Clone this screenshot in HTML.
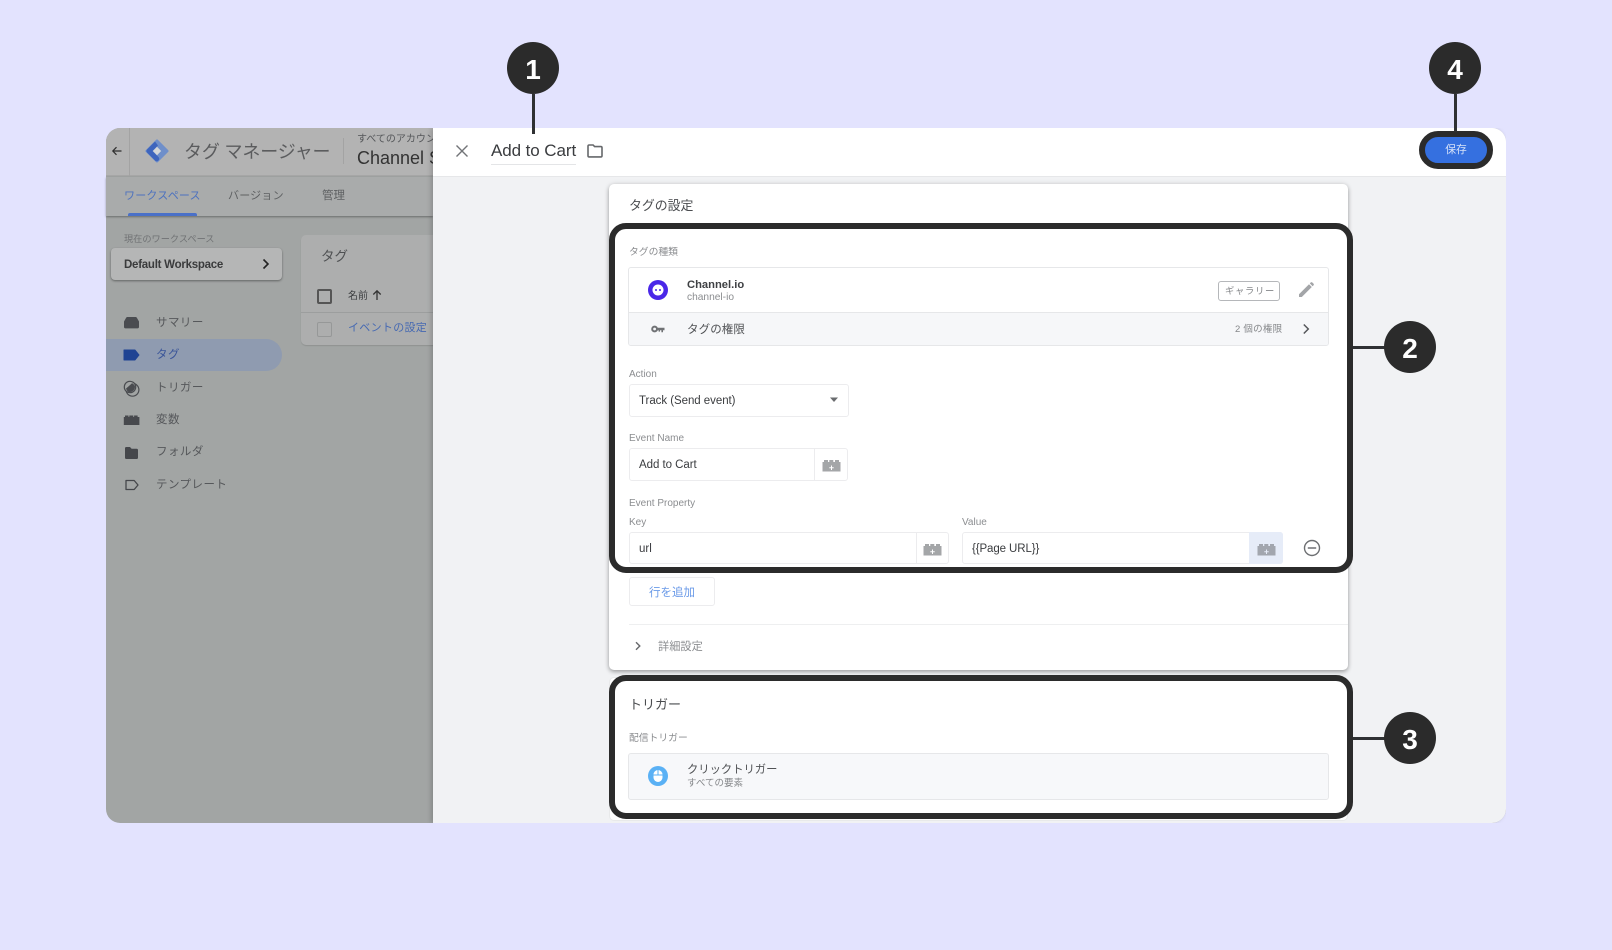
<!DOCTYPE html>
<html lang="ja"><head><meta charset="utf-8"><title>Add to Cart</title>
<style>
html,body{margin:0;padding:0}
body{width:1612px;height:950px;overflow:hidden;background:#e3e3fe;position:relative;font-family:"Liberation Sans","Noto Sans CJK JP",sans-serif;color:#3c4043}
div,span,svg{position:absolute;box-sizing:border-box}
.t{white-space:nowrap;line-height:20px;height:20px;filter:blur(.3px)}
.lbl{font-size:10px;color:#8b8d90}
.val{font-size:11.5px;color:#3a3c3f}
.nav{font-size:11.5px;color:#56585b;letter-spacing:.45px}
.box{background:#fff;border:1px solid #ececee;border-radius:3px}
.hl{border:6px solid #2b2b2b;border-radius:17px}
.dot{width:52px;height:52px;border-radius:50%;background:#2b2b2b;color:#fff;font-weight:bold;font-size:28px;line-height:55px;text-align:center}
.ln{background:#2f3133}
</style></head>
<body>

<div id="app" style="left:106px;top:128px;width:1400px;height:695px;border-radius:14px;overflow:hidden;background:#a2a5a4">
  <div style="left:0;top:0;width:327px;height:48px;background:#b3b3b3;border-bottom:1px solid #a6a6a6"></div>
  <div style="left:23px;top:0;width:1px;height:48px;background:#a3a3a3"></div>
  <div style="left:237px;top:10px;width:1px;height:26px;background:#a3a3a3"></div>
</div>

<svg style="left:111px;top:145px" width="12" height="12" viewBox="0 0 12 12"><path d="M10.5 6H2M5.5 2.2L1.800 6l3.700 3.800" fill="none" stroke="#2e2e2e" stroke-width="1.200"/></svg>
<svg style="left:144px;top:138px" width="26" height="26" viewBox="0 0 26 26">
  <path d="M13 3L23 13 13 23 3 13z" fill="#6f8fca" stroke="#6f8fca" stroke-width="3" stroke-linejoin="round"/>
  <path d="M11 3.500L3 11.500c-.8.800-.8 2.200 0 3l8 8c1 1 2.500 1 3.500 0s1-2.500 0-3.500L8.500 13 14 7.500" fill="#3e65bd"/>
  <path d="M13 8.800l4.200 4.200-4.200 4.200L8.800 13z" fill="#d4d6d8"/>
</svg>
<div class="t" style="left:184px;top:142px;font-size:18px;color:#5b5c5e;letter-spacing:-.15px">タグ マネージャー</div>
<div style="left:357px;top:128px;width:76px;height:48px;overflow:hidden">
  <div class="t" style="left:0;top:2px;font-size:10px;color:#55575a">すべてのアカウント</div>
  <div class="t" style="left:0;top:20px;font-size:18px;color:#333">Channel Site</div>
</div>

<div style="left:106px;top:177px;width:327px;height:39px;background:#a9abab;box-shadow:0 1px 2px rgba(0,0,0,.35)"></div>
<div class="t" style="left:124px;top:186px;font-size:11px;color:#4d72bf;letter-spacing:.2px">ワークスペース</div>
<div class="t" style="left:228px;top:186px;font-size:11px;color:#5e6062;letter-spacing:.2px">バージョン</div>
<div class="t" style="left:322px;top:186px;font-size:11.5px;color:#5e6062">管理</div>
<div style="left:128px;top:213px;width:69px;height:3px;border-radius:2px 2px 0 0;background:#4a70c8"></div>

<div class="t" style="left:124px;top:229px;font-size:9.200px;color:#707274">現在のワークスペース</div>
<div style="left:111px;top:248px;width:171px;height:32px;background:#b5b6b6;border-radius:4px;box-shadow:0 1px 2px rgba(0,0,0,.4)"></div>
<div class="t" style="left:124px;top:255px;font-size:11.500px;font-weight:bold;color:#3a3b3c;letter-spacing:-.25px">Default Workspace</div>
<svg style="left:260px;top:258px" width="12" height="12" viewBox="0 0 12 12"><path d="M3.500 1.500L8 6l-4.500 4.500" fill="none" stroke="#222" stroke-width="1.600"/></svg>

<div style="left:301px;top:235px;width:140px;height:110px;background:#adaeae;border-radius:5px;box-shadow:0 1px 1px rgba(0,0,0,.12)"></div>
<div style="left:301px;top:312px;width:132px;height:1px;background:#9c9e9e"></div>
<div class="t" style="left:321px;top:247px;font-size:13.500px;color:#4f5153">タグ</div>
<div style="left:317px;top:289px;width:15px;height:15px;border:2px solid #555;border-radius:2px"></div>
<div class="t" style="left:348px;top:287px;font-size:10px;color:#3d3f41">名前</div>
<svg style="left:371px;top:289px" width="12" height="12" viewBox="0 0 12 12"><path d="M6 11V2M2.300 5.500L6 1.800l3.700 3.700" fill="none" stroke="#333" stroke-width="1.300"/></svg>
<div style="left:317px;top:322px;width:15px;height:15px;border:1.500px solid #969898;border-radius:2px"></div>
<div class="t" style="left:348px;top:318px;font-size:11px;color:#4669b2;letter-spacing:.3px">イベントの設定</div>

<!-- sidebar -->
<div style="left:106px;top:339px;width:176px;height:32px;background:#8f9bb0;border-radius:0 16px 16px 0"></div>
<svg style="left:123px;top:314px" width="17" height="16" viewBox="0 0 17 16"><path d="M1 7.500L3 4C3.400 3.300 3.800 3 4.500 3h8c.7 0 1.100.3 1.500 1l2 3.500v5.500c0 .8-.6 1.400-1.400 1.400H2.400C1.600 14.400 1 13.800 1 13z" fill="#4a4c50"/></svg>
<svg style="left:123px;top:348px" width="17" height="14" viewBox="0 0 17 14"><path d="M1 2h11l4 5-4 5H1z" fill="#1f4393" stroke="#1f4393" stroke-linejoin="round"/></svg>
<svg style="left:123px;top:380px" width="17" height="17" viewBox="0 0 17 17"><circle cx="9.500" cy="9.800" r="6.400" fill="none" stroke="#4a4c50" stroke-width="1.200"/><circle cx="7" cy="7" r="5.700" fill="#a2a5a4" stroke="#4a4c50" stroke-width="1.200"/><path d="M12 6.500A5.500 5.500 0 0 1 5.500 12 6.400 6.400 0 0 1 3 8.600L9 3.200c1.500.5 2.500 2 3 3.300z" fill="#4a4c50"/></svg>
<svg style="left:123px;top:414px" width="17" height="12" viewBox="0 0 17 12"><path d="M.800 3H2V1.500h3.500V3h.800V1.500h4V3h.800V1.500h3.500V3h1.800v8H.800z" fill="#47494d"/></svg>
<svg style="left:124px;top:446px" width="15" height="14" viewBox="0 0 15 14"><path d="M1 2.300C1 1.600 1.500 1 2.200 1h3.800l1.600 1.800h5.200c.7 0 1.200.6 1.200 1.200v7.800c0 .7-.5 1.200-1.200 1.200H2.200C1.500 13 1 12.500 1 11.800z" fill="#45474b"/></svg>
<svg style="left:125px;top:479px" width="14" height="12" viewBox="0 0 14 12"><path d="M1 1.500h8.200L13 6l-3.800 4.500H1z" fill="none" stroke="#45474b" stroke-width="1.300" stroke-linejoin="round"/></svg>
<div class="t nav" style="left:156px;top:313px">サマリー</div>
<div class="t nav" style="left:156px;top:345px;color:#3a5599">タグ</div>
<div class="t nav" style="left:156px;top:378px">トリガー</div>
<div class="t nav" style="left:156px;top:410px">変数</div>
<div class="t nav" style="left:156px;top:442px">フォルダ</div>
<div class="t nav" style="left:156px;top:475px">テンプレート</div>

<!-- right panel -->
<div style="left:433px;top:128px;width:1073px;height:695px;background:#f1f2f4;border-radius:0 14px 14px 0;box-shadow:-2px 0 5px rgba(0,0,0,.18);clip-path:inset(0 0 0 -12px)"></div>
<div style="left:433px;top:128px;width:1073px;height:48px;background:#fff;border-radius:0 14px 0 0;border-bottom:1px solid #e6e7e9;box-sizing:content-box"></div>
<svg style="left:454px;top:143px" width="16" height="16" viewBox="0 0 16 16"><path d="M2.500 2.500l11 11M13.500 2.500l-11 11" stroke="#727477" stroke-width="1.400" fill="none"/></svg>
<div class="t" style="left:491px;top:141px;font-size:17px;color:#3a3c3f;letter-spacing:-.08px">Add to Cart</div>
<div style="left:491px;top:164px;width:85px;height:1px;background:#e4e5e7"></div>
<svg style="left:586px;top:142px" width="18" height="18" viewBox="0 0 18 18"><path d="M2 4.200C2 3.500 2.500 3 3.200 3h3.900l1.500 1.600h6.200c.7 0 1.200.5 1.200 1.200v7.900c0 .7-.5 1.200-1.200 1.200H3.200C2.500 14.900 2 14.400 2 13.700z" fill="none" stroke="#66686b" stroke-width="1.600"/></svg>

<!-- card 1 -->
<div style="left:609px;top:184px;width:739px;height:486px;background:#fff;border-radius:5px;box-shadow:0 2px 4px rgba(0,0,0,.3),0 0 6px rgba(0,0,0,.1)"></div>
<div class="t" style="left:629px;top:196px;font-size:12.900px;color:#4a4c4f">タグの設定</div>
<div class="t lbl" style="left:629px;top:241.500px;font-size:9.800px;top:243px">タグの種類</div>

<div style="left:628px;top:267px;width:701px;height:79px;border:1px solid #e6e7e9;border-radius:3px;background:#fff;overflow:hidden">
  <div style="left:0;top:44px;width:701px;height:34px;background:#f6f7f9;border-top:1px solid #e6e7e9"></div>
</div>
<svg style="left:648px;top:280px" width="20" height="20" viewBox="0 0 20 20"><circle cx="10" cy="10" r="10" fill="#4a27e8"/><circle cx="10" cy="10" r="5.500" fill="#fff"/><circle cx="8" cy="10" r="1" fill="#4a27e8"/><circle cx="12" cy="10" r="1" fill="#4a27e8"/></svg>
<div class="t" style="left:687px;top:274.500px;font-size:11.200px;font-weight:bold;color:#3e4043">Channel.io</div>
<div class="t" style="left:687px;top:288px;font-size:10.200px;color:#8b8d90">channel-io</div>
<div style="left:1218px;top:281px;width:62px;height:20px;border:1px solid #b5b7ba;border-radius:3px;background:#fff"></div>
<div class="t" style="left:1225px;top:281px;font-size:9.300px;color:#85878a;letter-spacing:.7px">ギャラリー</div>
<svg style="left:1297px;top:281px" width="18" height="18" viewBox="0 0 18 18"><path d="M2 13.200L12 3.200 14.800 6 4.800 16H2zM12.800 2.400l1-1c.4-.4 1-.4 1.400 0l1.400 1.400c.4.4.4 1 0 1.400l-1 1z" fill="#a3a5a8"/></svg>
<svg style="left:651px;top:324px" width="14" height="10" viewBox="0 0 14 10"><circle cx="3.600" cy="5" r="2.400" fill="none" stroke="#707275" stroke-width="2"/><path d="M6 3.800h7.500v2.400H12v2h-1.600v-2H9v1.400H7.600V6.200H6z" fill="#707275"/></svg>
<div class="t" style="left:687px;top:320px;font-size:11.500px;color:#505255;letter-spacing:.1px">タグの権限</div>
<div class="t" style="left:1235px;top:320px;font-size:9.500px;color:#85878a;letter-spacing:.25px">2 個の権限</div>
<svg style="left:1300px;top:323px" width="12" height="12" viewBox="0 0 12 12"><path d="M3.800 1.500L8.300 6l-4.500 4.500" fill="none" stroke="#55575a" stroke-width="1.500"/></svg>

<div class="t lbl" style="left:629px;top:364.500px">Action</div>
<div class="box" style="left:629px;top:384px;width:220px;height:33px"></div>
<div class="t val" style="left:639px;top:390.500px;letter-spacing:-.05px">Track (Send event)</div>
<svg style="left:829px;top:397px" width="10" height="6" viewBox="0 0 10 6"><path d="M1 .5h8L5 5z" fill="#6a6c6f"/></svg>

<div class="t lbl" style="left:629px;top:428.500px">Event Name</div>
<div class="box" style="left:629px;top:448px;width:219px;height:33px"></div>
<div style="left:814px;top:448px;width:1px;height:33px;background:#ececee"></div>
<div class="t val" style="left:639px;top:455px;letter-spacing:-.05px">Add to Cart</div>
<svg style="left:822px;top:459px" width="19" height="13" viewBox="0 0 19 13"><path d="M.500 3H2V1h4v2h1.300V1h4v2H13V1h4v2h1.500v9.500H.500z" fill="#a4a6a8"/><path d="M9.500 6.500v4.500M7.300 8.700h4.400" stroke="#fff" stroke-width="1"/></svg>

<div class="t lbl" style="left:629px;top:493.500px">Event Property</div>
<div class="t lbl" style="left:629px;top:512.500px">Key</div>
<div class="t lbl" style="left:962px;top:512.500px">Value</div>
<div class="box" style="left:629px;top:532px;width:320px;height:32px"></div>
<div style="left:916px;top:532px;width:1px;height:32px;background:#ececee"></div>
<div class="t val" style="left:639px;top:538.500px">url</div>
<svg style="left:923px;top:543px" width="19" height="13" viewBox="0 0 19 13"><path d="M.500 3H2V1h4v2h1.300V1h4v2H13V1h4v2h1.500v9.500H.500z" fill="#a4a6a8"/><path d="M9.500 6.500v4.500M7.300 8.700h4.400" stroke="#fff" stroke-width="1"/></svg>
<div class="box" style="left:962px;top:532px;width:321px;height:32px"></div>
<div style="left:1249px;top:532px;width:34px;height:32px;background:#e6ecf8;border-radius:0 3px 3px 0"></div>
<div class="t val" style="left:972px;top:538.500px;letter-spacing:-.1px">{{Page URL}}</div>
<svg style="left:1257px;top:543px" width="19" height="13" viewBox="0 0 19 13"><path d="M.500 3H2V1h4v2h1.300V1h4v2H13V1h4v2h1.500v9.500H.500z" fill="#a2a6ae"/><path d="M9.500 6.500v4.500M7.300 8.700h4.400" stroke="#e6ecf8" stroke-width="1"/></svg>
<svg style="left:1303px;top:539px" width="18" height="18" viewBox="0 0 18 18"><circle cx="9" cy="9" r="7.500" fill="none" stroke="#6d6f72" stroke-width="1.400"/><path d="M4.800 9h8.400" stroke="#6d6f72" stroke-width="1.500"/></svg>

<div class="box" style="left:629px;top:577px;width:86px;height:29px"></div>
<div class="t" style="left:649px;top:583px;font-size:11.500px;color:#6a9ae8">行を追加</div>
<div style="left:629px;top:624px;width:719px;height:1px;background:#eeeff0"></div>
<svg style="left:632px;top:640px" width="12" height="12" viewBox="0 0 12 12"><path d="M4 2.200L7.800 6 4 9.800" fill="none" stroke="#66686b" stroke-width="1.400"/></svg>
<div class="t" style="left:658px;top:637px;font-size:11.200px;color:#8b8d90">詳細設定</div>

<!-- card 2 -->
<div style="left:609px;top:677px;width:739px;height:144px;background:#fff;border-radius:5px;border:1px solid #e8e9ea"></div>
<div class="t" style="left:629px;top:695px;font-size:13px;color:#4a4c4f">トリガー</div>
<div class="t lbl" style="left:629px;top:727px;font-size:9.800px;top:728.500px">配信トリガー</div>
<div style="left:628px;top:753px;width:701px;height:47px;background:#f7f8fa;border:1px solid #e6e7e9;border-radius:3px"></div>
<svg style="left:648px;top:766px" width="20" height="20" viewBox="0 0 20 20"><circle cx="10" cy="10" r="10" fill="#5ab1f5"/><rect x="5.500" y="4" width="9" height="12" rx="4.500" fill="#fff"/><path d="M5.500 9h9M10 4v5" stroke="#5ab1f5" stroke-width="1"/></svg>
<div class="t" style="left:687px;top:759.500px;font-size:11.300px;color:#505255">クリックトリガー</div>
<div class="t" style="left:687px;top:773.500px;font-size:9.500px;color:#85878a">すべての要素</div>

<!-- highlights -->
<div class="hl" style="left:609px;top:223px;width:744px;height:350px"></div>
<div class="hl" style="left:609px;top:675px;width:744px;height:144px"></div>
<div style="left:1419px;top:131px;width:74px;height:38px;border:6px solid #2b2b2b;border-radius:19px;background:#3570e0"></div>
<div class="t" style="left:1425px;top:140px;width:62px;text-align:center;font-size:10.800px;color:#d5e1f8">保存</div>

<div class="ln" style="left:531.500px;top:94px;width:3px;height:40px"></div>
<div class="ln" style="left:1453.500px;top:94px;width:3px;height:38px"></div>
<div class="ln" style="left:1353px;top:346px;width:34px;height:3px"></div>
<div class="ln" style="left:1353px;top:736.500px;width:34px;height:3px"></div>
<div class="dot" style="left:507px;top:42px">1</div>
<div class="dot" style="left:1429px;top:42px">4</div>
<div class="dot" style="left:1384px;top:321px">2</div>
<div class="dot" style="left:1384px;top:712px">3</div>

</body></html>
